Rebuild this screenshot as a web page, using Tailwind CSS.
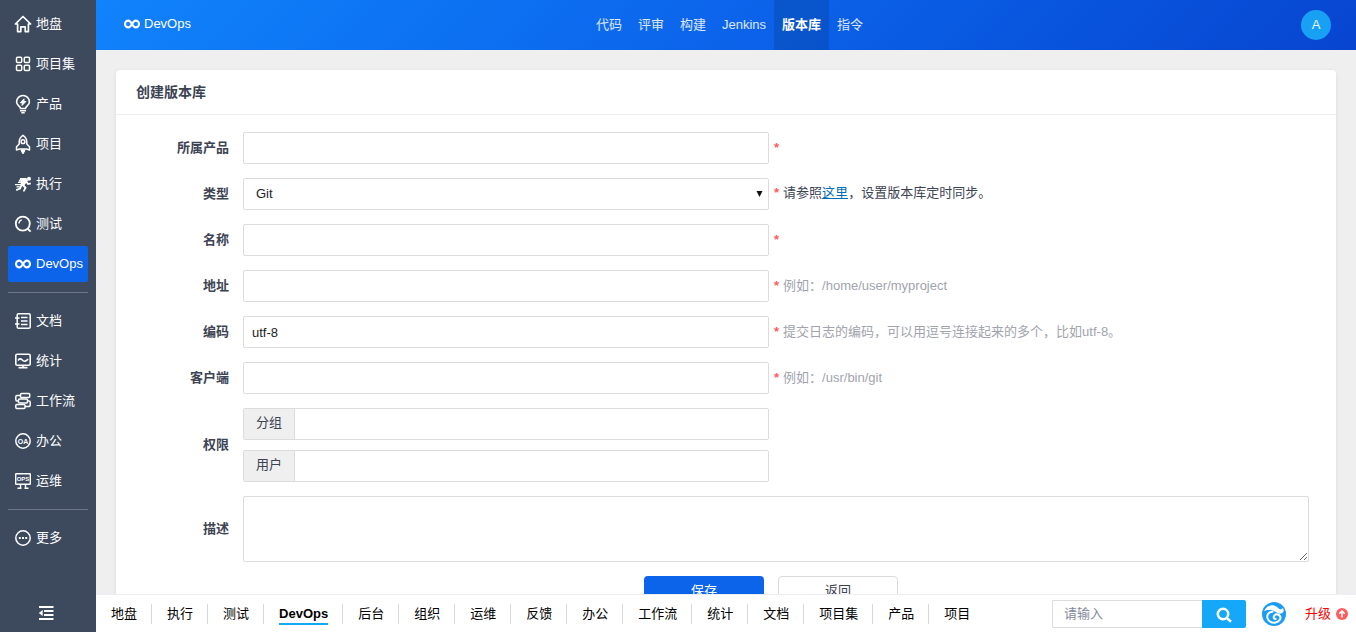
<!DOCTYPE html>
<html lang="zh-CN">
<head>
    <meta charset="UTF-8">
    <meta name="viewport" content="width=device-width, initial-scale=1.0">
    <title>创建版本库</title>
    <script src="https://cdn.jsdelivr.net/npm/@tailwindcss/browser@4"></script>
</head>
<body class="flex h-screen overflow-hidden bg-[#efefef] font-['Liberation_Sans','Noto_Sans_CJK_SC',sans-serif] text-[13px] leading-5 text-[#3c4353]">
    <!-- 左侧主菜单 -->
    <aside class="flex w-24 shrink-0 flex-col justify-between bg-[#3d4a5e] px-2 text-white">
        <nav class="flex flex-col gap-1 pt-1.5">
            <a href="#" class="flex h-9 items-center gap-[5px] rounded-xs px-[7px]">
                <svg class="size-4 shrink-0 overflow-visible" viewBox="0 0 16 16" fill="none" stroke="currentColor" stroke-width="1.7" stroke-linejoin="round" stroke-linecap="round"><path d="M.4 8 8 .5 15.600 8h-2.200v7.600h-3.200v-4.800H5.800v4.800H2.600V8z"/></svg>
                <span>地盘</span>
            </a>
            <a href="#" class="flex h-9 items-center gap-[5px] rounded-xs px-[7px]">
                <svg class="size-4 shrink-0" viewBox="0 0 16 16" fill="none" stroke="currentColor" stroke-width="1.5"><rect x="1.500" y="1.300" width="5.200" height="5.200" rx="1"/><rect x="9.300" y="1.300" width="5.200" height="5.200" rx="1"/><rect x="1.500" y="9.300" width="5.200" height="5.200" rx="1"/><rect x="9.300" y="9.300" width="5.200" height="5.200" rx="1"/></svg>
                <span>项目集</span>
            </a>
            <a href="#" class="flex h-9 items-center gap-[5px] rounded-xs px-[7px]">
                <svg class="size-4 shrink-0 overflow-visible" viewBox="0 0 16 16" fill="none" stroke="currentColor" stroke-width="1.6"><path d="M5.500 12.500c0-2-3.900-3-3.900-6.600a6.400 6.400 0 0 1 12.800 0c0 3.600-3.900 4.600-3.900 6.600zM5 14.800h6M6.300 16.700h3.400"/><path d="M9 2.800 5.300 6.700h2L7 9.500l3.900-4h-2z" fill="currentColor" stroke-width="1"/></svg>
                <span>产品</span>
            </a>
            <a href="#" class="flex h-9 items-center gap-[5px] rounded-xs px-[7px]">
                <svg class="size-4 shrink-0 overflow-visible" viewBox="0 0 16 16" fill="none" stroke="currentColor" stroke-width="1.500" stroke-linejoin="round"><path d="M8-.7C5.300 1 4.200 3 4.200 6v2L1.500 10.700v3.300l3-1h7l3 1v-3.300L11.800 8V6C11.800 3 10.700 1 8-.7z"/><circle cx="8" cy="5.700" r="1.900"/><path d="M6.500 13.500v1.200L8 17.300l1.500-2.600v-1.200" fill="currentColor"/></svg>
                <span>项目</span>
            </a>
            <a href="#" class="flex h-9 items-center gap-[5px] rounded-xs px-[7px]">
                <svg class="size-4 shrink-0 overflow-visible" viewBox="0 0 16 16" fill="none" stroke="currentColor"><circle cx="14" cy="2.700" r="2" fill="currentColor" stroke="none"/><path d="M5 2h6.300l1.700 2.500-3.500 4.700 2.200 2.300-2.200 4H7.800l1.500-3.800L6 9z" fill="currentColor" stroke="none"/><path d="M11.300 5.500 13 8l2.800-.7M6.700 8.800 5 12.600l-3.800 1.600" stroke-width="1.800"/><path d="m6.500 2.500-2.300 3" stroke-width="1.600"/><path d="M3 6.300h4M0 8.600h6M1.500 10.900h3.500" stroke-width="1.200"/></svg>
                <span>执行</span>
            </a>
            <a href="#" class="flex h-9 items-center gap-[5px] rounded-xs px-[7px]">
                <svg class="size-4 shrink-0 overflow-visible" viewBox="0 0 16 16" fill="none" stroke="currentColor" stroke-width="1.800"><circle cx="7.800" cy="7.600" r="7"/><path d="m12.300 12.300 3.300 3.400"/><path d="M3.900 7.500A4 4 0 0 1 6.800 3.900" stroke-width="1.300"/></svg>
                <span>测试</span>
            </a>
            <a href="#" class="flex h-9 items-center gap-[5px] rounded-xs bg-[#0c64eb] px-[7px]">
                <svg class="size-4 shrink-0" viewBox="0 0 16 16" fill="none" stroke="currentColor" stroke-width="2.100"><path d="M8 8C6.500 5.500 5.500 4.600 4.400 4.600a3.400 3.400 0 0 0 0 6.800C5.500 11.400 6.500 10.500 8 8s2.500-3.400 3.600-3.400a3.400 3.400 0 0 1 0 6.800C10.500 11.400 9.500 10.500 8 8z"/></svg>
                <span>DevOps</span>
            </a>
            <hr class="my-1.5 border-[#6c7687]">
            <a href="#" class="flex h-9 items-center gap-[5px] rounded-xs px-[7px]">
                <svg class="size-4 shrink-0" viewBox="0 0 16 16" fill="none" stroke="currentColor" stroke-width="1.500"><rect x="2.200" y=".8" width="13" height="14.400" rx="1.300"/><path d="M0 5h4.500M0 11h4.500M6 4.500h6.500M6 8h6.500M6 11.500h6.500"/></svg>
                <span>文档</span>
            </a>
            <a href="#" class="flex h-9 items-center gap-[5px] rounded-xs px-[7px]">
                <svg class="size-4 shrink-0" viewBox="0 0 16 16" fill="none" stroke="currentColor" stroke-width="1.600"><rect x=".8" y="1.300" width="14.400" height="10.900" rx="1.300"/><path d="M3 7.500c1.500-2 2.800-2 4-.7s2.500 1.700 3.500 1.200S12.300 7 13 6"/><path d="M3.500 14.600h9M8 12v2.500"/></svg>
                <span>统计</span>
            </a>
            <a href="#" class="flex h-9 items-center gap-[5px] rounded-xs px-[7px]">
                <svg class="size-4 shrink-0 overflow-visible" viewBox="0 0 16 16" fill="none" stroke="currentColor" stroke-width="1.500"><rect x="5.500" y=".5" width="9.200" height="3.900" rx="1"/><rect x="3.500" y="6.100" width="9" height="3.800" rx="1"/><rect x=".8" y="11.600" width="9.200" height="3.900" rx="1"/><path d="M5.500 2.500H2Q.8 2.500.8 4v2.500Q.8 8 2 8h1.500M12.500 8H14q1.200 0 1.200 1.300v2.700q0 1.500-1.200 1.500h-4"/></svg>
                <span>工作流</span>
            </a>
            <a href="#" class="flex h-9 items-center gap-[5px] rounded-xs px-[7px]">
                <svg class="size-4 shrink-0" viewBox="0 0 16 16" fill="none" stroke="currentColor" stroke-width="1.500"><circle cx="8" cy="8" r="7.200"/><text x="8" y="10.500" text-anchor="middle" font-size="7" font-weight="700" fill="currentColor" stroke="none">OA</text></svg>
                <span>办公</span>
            </a>
            <a href="#" class="flex h-9 items-center gap-[5px] rounded-xs px-[7px]">
                <svg class="size-4 shrink-0" viewBox="0 0 16 16" fill="none" stroke="currentColor" stroke-width="1.400"><rect x=".7" y=".7" width="14.600" height="10.600" rx=".5"/><text x="8" y="8.200" text-anchor="middle" font-size="6" font-weight="700" fill="currentColor" stroke="none">OPS</text><path d="M5.500 11.500v3.500M10.500 11.500v3.500M2.500 15.200h4M9.500 15.200h4"/></svg>
                <span>运维</span>
            </a>
            <hr class="my-1.5 border-[#6c7687]">
            <a href="#" class="flex h-9 items-center gap-[5px] rounded-xs px-[7px]">
                <svg class="size-4 shrink-0" viewBox="0 0 16 16" fill="none" stroke="currentColor" stroke-width="1.500"><circle cx="8" cy="8" r="7.200"/><path d="M3.800 8h2M7 8h2M10.200 8h2" stroke-width="2"/></svg>
                <span>更多</span>
            </a>
        </nav>
        <button type="button" aria-label="收起菜单" class="flex h-[38px] items-center justify-center pr-1">
            <svg class="size-4" viewBox="0 0 16 16" fill="none" stroke="currentColor" stroke-width="1.900"><path d="M1 2h14.500M6 6h9.500M6 10h9.500M1 14h14.500"/><path d="M4.700 5v6L.8 8z" fill="currentColor" stroke="none"/></svg>
        </button>
    </aside>

    <div class="flex min-w-0 flex-1 flex-col">
        <!-- 顶部导航 -->
        <header class="grid h-[50px] shrink-0 grid-cols-[1fr_auto_1fr] items-center bg-linear-135 from-[#1183fb] via-[#0c64eb] to-[#0845d0] pr-[17px] pl-6">
            <a href="#" class="flex items-center gap-1 pb-0.5 pl-1 text-white">
                <svg class="size-4" viewBox="0 0 16 16" fill="none" stroke="currentColor" stroke-width="2.100"><path d="M8 8C6.500 5.500 5.500 4.600 4.400 4.600a3.400 3.400 0 0 0 0 6.800C5.500 11.400 6.500 10.500 8 8s2.500-3.400 3.600-3.400a3.400 3.400 0 0 1 0 6.800C10.500 11.400 9.500 10.500 8 8z"/></svg>
                <span>DevOps</span>
            </a>
            <nav class="flex h-[50px] leading-[50px] text-white/85">
                <a href="#" class="px-2">代码</a>
                <a href="#" class="px-2">评审</a>
                <a href="#" class="px-2">构建</a>
                <a href="#" class="px-2">Jenkins</a>
                <a href="#" class="bg-black/12 px-2 font-bold text-white">版本库</a>
                <a href="#" class="px-2">指令</a>
            </nav>
            <button type="button" class="mr-2 size-[30px] justify-self-end rounded-full bg-[#18a0f5] text-white/90">A</button>
        </header>

        <!-- 创建表单 -->
        <main class="min-h-0 flex-1 overflow-hidden p-5">
            <div class="rounded bg-white pb-8 shadow-[0_1px_4px_rgba(0,0,0,0.08)]">
                <h2 class="flex h-[45px] items-center border-b border-[#eeeeee] px-5 text-sm font-bold">创建版本库</h2>
                <form class="flex flex-col gap-[14px] pt-[17px] pr-[27px]">
                    <div class="flex items-center gap-[14px]">
                        <label for="product" class="w-[113px] text-right font-bold">所属产品</label>
                        <div class="grid flex-1 grid-cols-[59fr_60fr] items-center gap-[5px]">
                            <input id="product" type="text" class="h-8 rounded-xs border border-[#dcdcdc] px-2 text-[#222222]">
                            <span class="font-bold text-[#ff5d5d]">*</span>
                        </div>
                    </div>
                    <div class="flex items-center gap-[14px]">
                        <label for="scm" class="w-[113px] text-right font-bold">类型</label>
                        <div class="grid flex-1 grid-cols-[59fr_60fr] items-center gap-[5px]">
                            <div class="relative">
                                <select id="scm" class="h-8 w-full appearance-none rounded-xs border border-[#dcdcdc] bg-white px-3 text-[#222222]">
                                    <option>Git</option>
                                    <option>Subversion</option>
                                    <option>GitLab</option>
                                </select>
                                <svg class="pointer-events-none absolute top-3 right-[6px] h-2 w-[7px]" viewBox="0 0 7 8"><path d="M.5 1h6L3.500 7z" fill="#111111"/></svg>
                            </div>
                            <div class="flex items-center gap-1 pb-0.5"><span class="font-bold text-[#ff5d5d]">*</span><span>请参照<a href="#" class="text-[#036eb8] underline">这里</a>，设置版本库定时同步。</span></div>
                        </div>
                    </div>
                    <div class="flex items-center gap-[14px]">
                        <label for="name" class="w-[113px] text-right font-bold">名称</label>
                        <div class="grid flex-1 grid-cols-[59fr_60fr] items-center gap-[5px]">
                            <input id="name" type="text" class="h-8 rounded-xs border border-[#dcdcdc] px-2 text-[#222222]">
                            <span class="font-bold text-[#ff5d5d]">*</span>
                        </div>
                    </div>
                    <div class="flex items-center gap-[14px]">
                        <label for="path" class="w-[113px] text-right font-bold">地址</label>
                        <div class="grid flex-1 grid-cols-[59fr_60fr] items-center gap-[5px]">
                            <input id="path" type="text" class="h-8 rounded-xs border border-[#dcdcdc] px-2 text-[#222222]">
                            <div class="flex items-center gap-1"><span class="font-bold text-[#ff5d5d]">*</span><span class="text-[#a1a4ae]">例如：/home/user/myproject</span></div>
                        </div>
                    </div>
                    <div class="flex items-center gap-[14px]">
                        <label for="encoding" class="w-[113px] text-right font-bold">编码</label>
                        <div class="grid flex-1 grid-cols-[59fr_60fr] items-center gap-[5px]">
                            <input id="encoding" type="text" value="utf-8" class="h-8 rounded-xs border border-[#dcdcdc] px-2 text-[#222222]">
                            <div class="flex items-center gap-1"><span class="font-bold text-[#ff5d5d]">*</span><span class="text-[#a1a4ae]">提交日志的编码，可以用逗号连接起来的多个，比如utf-8。</span></div>
                        </div>
                    </div>
                    <div class="flex items-center gap-[14px]">
                        <label for="client" class="w-[113px] text-right font-bold">客户端</label>
                        <div class="grid flex-1 grid-cols-[59fr_60fr] items-center gap-[5px]">
                            <input id="client" type="text" class="h-8 rounded-xs border border-[#dcdcdc] px-2 text-[#222222]">
                            <div class="flex items-center gap-1"><span class="font-bold text-[#ff5d5d]">*</span><span class="text-[#a1a4ae]">例如：/usr/bin/git</span></div>
                        </div>
                    </div>
                    <div class="flex items-center gap-[14px]">
                        <span class="w-[113px] text-right font-bold">权限</span>
                        <div class="grid flex-1 grid-cols-[59fr_60fr] gap-[5px]">
                            <div class="flex flex-col gap-2.5">
                                <div class="flex h-8 rounded-xs border border-[#dcdcdc]">
                                    <label for="groups" class="border-r border-[#dcdcdc] bg-[#efefef] px-3 leading-7">分组</label>
                                    <input id="groups" type="text" class="min-w-0 flex-1 px-2">
                                </div>
                                <div class="flex h-8 rounded-xs border border-[#dcdcdc]">
                                    <label for="users" class="border-r border-[#dcdcdc] bg-[#efefef] px-3 leading-7">用户</label>
                                    <input id="users" type="text" class="min-w-0 flex-1 px-2">
                                </div>
                            </div>
                        </div>
                    </div>
                    <div class="flex items-center gap-[14px]">
                        <label for="desc" class="w-[113px] text-right font-bold">描述</label>
                        <textarea id="desc" class="h-[66px] flex-1 rounded-xs border border-[#dcdcdc] px-2 py-1"></textarea>
                    </div>
                    <div class="flex justify-center gap-[14px] pl-[117px]">
                        <button type="submit" class="h-8 w-[120px] rounded bg-[#0c64eb] pb-0.5 text-white">保存</button>
                        <button type="button" class="h-8 w-[120px] rounded border border-[#d8dbde] bg-white pb-0.5">返回</button>
                    </div>
                </form>
            </div>
        </main>

        <!-- 底部快捷栏 -->
        <footer class="flex h-[38px] shrink-0 items-center justify-between border-t border-[#ededf5] bg-white pt-0.5 pr-2 pb-px text-black">
            <nav class="flex items-center">
                <a href="#" class="border-r border-[#d8d8d8] pr-[14px] pl-[15px]">地盘</a>
                <a href="#" class="border-r border-[#d8d8d8] pr-[14px] pl-[15px]">执行</a>
                <a href="#" class="border-r border-[#d8d8d8] pr-[14px] pl-[15px]">测试</a>
                <a href="#" class="relative border-r border-[#d8d8d8] pr-[14px] pl-[15px] font-bold">DevOps<span class="absolute right-[14px] -bottom-px left-[15px] h-0.5 bg-[#16a8f8]"></span></a>
                <a href="#" class="border-r border-[#d8d8d8] pr-[14px] pl-[15px]">后台</a>
                <a href="#" class="border-r border-[#d8d8d8] pr-[14px] pl-[15px]">组织</a>
                <a href="#" class="border-r border-[#d8d8d8] pr-[14px] pl-[15px]">运维</a>
                <a href="#" class="border-r border-[#d8d8d8] pr-[14px] pl-[15px]">反馈</a>
                <a href="#" class="border-r border-[#d8d8d8] pr-[14px] pl-[15px]">办公</a>
                <a href="#" class="border-r border-[#d8d8d8] pr-[14px] pl-[15px]">工作流</a>
                <a href="#" class="border-r border-[#d8d8d8] pr-[14px] pl-[15px]">统计</a>
                <a href="#" class="border-r border-[#d8d8d8] pr-[14px] pl-[15px]">文档</a>
                <a href="#" class="border-r border-[#d8d8d8] pr-[14px] pl-[15px]">项目集</a>
                <a href="#" class="border-r border-[#d8d8d8] pr-[14px] pl-[15px]">产品</a>
                <a href="#" class="pr-[14px] pl-[15px]">项目</a>
            </nav>
            <div class="flex items-center">
                <form class="mr-4 flex h-7">
                    <input type="text" aria-label="搜索" placeholder="请输入" class="w-[150px] rounded-l-xs border border-r-0 border-[#dcdcdc] pr-2 pl-[11px] placeholder:text-[#838a9d]">
                    <button type="submit" aria-label="搜索" class="flex w-11 items-center justify-center rounded-r-xs bg-[#16a8f8] pt-0.5 text-white">
                        <svg class="size-4" viewBox="0 0 16 16" fill="none" stroke="currentColor" stroke-width="2.500"><circle cx="7" cy="7" r="5.200"/><path d="m10.500 10.700 4.500 4"/></svg>
                    </button>
                </form>
                <a href="#" aria-label="禅道" class="mr-[19px]">
                    <svg class="size-6" viewBox="0 0 24 24" fill="none"><circle cx="12" cy="12" r="12" fill="#1b9df3"/><path d="M2 9.500C4 4.500 8.500 2.500 12.500 3.700c3.300 1 4 3.300 6 3.600 1.300.2 2-.5 2-1.500 1.800 2 1.500 4.500-.8 5.500-2.500 1-4.700-.5-6.500-1.500C9.500 7.500 5 7.500 2 9.500z" fill="#ffffff"/><path d="M10.500 9.800C6.500 10 4.500 13 5.500 16.200s4.500 5 8 4.300 5.700-3.600 4.700-6-4.200-2.800-5.700-1-.7 3.700 1.200 3.500" stroke="#ffffff" stroke-width="2" stroke-linecap="round"/></svg>
                </a>
                <a href="#" class="flex items-center gap-[5px] text-[#f90000]">
                    <span>升级</span>
                    <svg class="size-3" viewBox="0 0 12 12" fill="none"><circle cx="6" cy="6" r="6" fill="#ff5d5d"/><path d="M6 9.500V3.500M3.300 5.800 6 3l2.700 2.800" stroke="#ffffff" stroke-width="1.600"/></svg>
                </a>
            </div>
        </footer>
    </div>
</body>
</html>
